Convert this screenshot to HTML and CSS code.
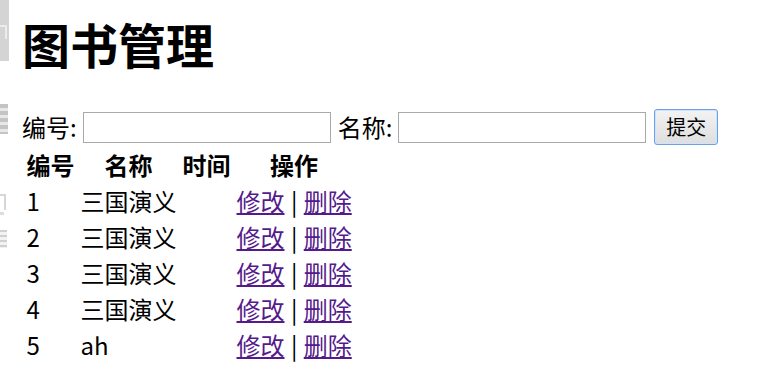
FILE: index.html
```html
<!DOCTYPE html>
<html lang="zh-CN">
<head>
<meta charset="utf-8">
<title>图书管理</title>
<link rel="stylesheet" href="styles.css">
</head>
<body>
<div class="edge" aria-hidden="true">
  <div class="edge-block"><i class="mark m0"></i></div>
  <i class="mark m1"></i>
  <i class="mark m2"></i>
  <i class="mark m3"></i>
  <i class="mark m4"></i>
</div>
<main class="page">
  <h1 class="title">图书管理</h1>
  <form class="search">
    <label class="field">编号:</label>
    <input class="text-input" type="text">
    <label class="field">名称:</label>
    <input class="text-input" type="text">
    <button class="submit" type="button">提交</button>
  </form>
  <table class="books">
    <thead>
      <tr><th>编号</th><th>名称</th><th>时间</th><th>操作</th></tr>
    </thead>
    <tbody>
      <tr><td>1</td><td>三国演义</td><td></td><td class="ops"><a href="#" class="visited">修改</a> | <a href="#" class="visited">删除</a></td></tr>
      <tr><td>2</td><td>三国演义</td><td></td><td class="ops"><a href="#" class="visited">修改</a> | <a href="#" class="visited">删除</a></td></tr>
      <tr><td>3</td><td>三国演义</td><td></td><td class="ops"><a href="#" class="visited">修改</a> | <a href="#" class="visited">删除</a></td></tr>
      <tr><td>4</td><td>三国演义</td><td></td><td class="ops"><a href="#" class="visited">修改</a> | <a href="#" class="visited">删除</a></td></tr>
      <tr><td>5</td><td>ah</td><td></td><td class="ops"><a href="#" class="visited">修改</a> | <a href="#" class="visited">删除</a></td></tr>
    </tbody>
  </table>
</main>
</body>
</html>
```
FILE: styles.css
```css
html, body {
  margin: 0;
  padding: 0;
  background: #ffffff;
}
body {
  font-family: "Noto Sans CJK SC", sans-serif;
  font-size: 24px;
  color: #000;
  position: relative;
  width: 759px;
  height: 392px;
  overflow: hidden;
}
.page {
  padding-left: 22px;
}
.title {
  margin: 13px 0 0 0;
  font-size: 48px;
  font-weight: 700;
  line-height: 60px;
  height: 60px;
}
.search {
  display: flex;
  align-items: center;
  margin-top: 36px;
  height: 36px;
}
.field {
  font-size: 24px;
  line-height: 30px;
  margin-right: 6px;
}
.text-input {
  box-sizing: border-box;
  width: 248px;
  height: 31px;
  margin: 0 7px 0 0;
  border: 1px solid #a9a9a9;
  padding: 0 3px;
  font-size: 20px;
  background: #fff;
}
.submit {
  box-sizing: border-box;
  width: 64px;
  height: 36px;
  margin: 0 0 0 1px;
  padding: 0;
  border: 1px solid #6d9fe3;
  border-radius: 3px;
  background: linear-gradient(#f3f3f3, #dedede);
  font-family: "Noto Sans CJK SC", sans-serif;
  font-size: 20px;
  line-height: 34px;
  color: #000;
  box-shadow: inset 0 0 0 1px #cfe3fb;
}
.books {
  border-collapse: separate;
  border-spacing: 3px;
  font-size: 24px;
  line-height: 30px;
}
.books th,
.books td {
  padding: 1.5px;
  white-space: nowrap;
  height: 30px;
}
.books th {
  font-weight: 700;
  text-align: center;
}
.books td {
  text-align: left;
}
.books .ops {
  word-spacing: 1px;
}
.visited {
  color: #551a8b;
  text-decoration: underline;
}
.edge {
  position: absolute;
  left: 0;
  top: 0;
  width: 9px;
  height: 392px;
  overflow: hidden;
}
.edge-block {
  width: 9px;
  height: 61px;
  background: #d4d4d4;
  position: relative;
}
.mark {
  position: absolute;
  display: block;
}
.m0 { left: 0; top: 25px; width: 7px; height: 14px; border-top: 2px solid #ececec; border-right: 2px solid #ececec; box-sizing: border-box; }
.m1 { left: 0; top: 104px; width: 8px; height: 30px; background: repeating-linear-gradient(#c4c4c4 0 4px, #e8e8e8 4px 7px); }
.m2 { left: 0; top: 194px; width: 6px; height: 16px; border-right: 2px solid #d6d6d6; border-top: 2px solid #d6d6d6; box-sizing: border-box; }
.m3 { left: 0; top: 230px; width: 7px; height: 18px; background: repeating-linear-gradient(#d0d0d0 0 2px, #f2f2f2 2px 5px); }
.m4 { left: 0; top: 212px; width: 4px; height: 3px; background: #dddddd; }
```
